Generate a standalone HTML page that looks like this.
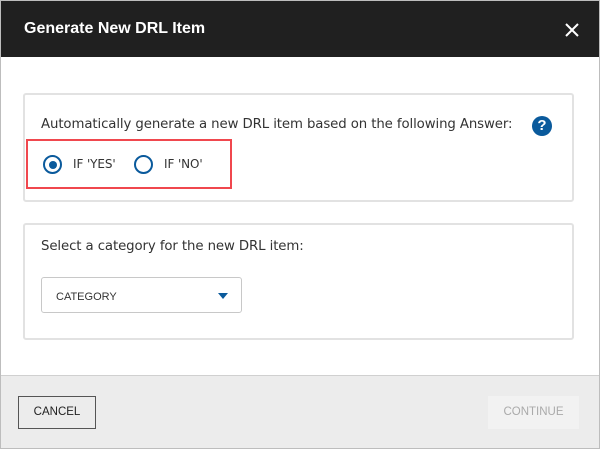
<!DOCTYPE html>
<html><head><style>
*{box-sizing:border-box;margin:0;padding:0}
body{width:600px;height:449px;background:#fff;font-family:"Liberation Sans",sans-serif;position:relative;overflow:hidden}
.frame{position:absolute;left:0;top:0;width:600px;height:449px;border:1px solid #bdbdbd}
.hdr{position:absolute;left:1px;top:1px;width:598px;height:56px;background:#202020;color:#fff;font-weight:bold;font-size:16px}
.hdr span{position:absolute;left:23px;top:19px}
.box{position:absolute;left:23px;width:551px;border:2px solid #e2e2e2;border-radius:3px;background:#fff}
.t{position:absolute;font-size:13.3px;color:#333;font-family:"DejaVu Sans",sans-serif;white-space:nowrap;letter-spacing:-0.1px}
.rad{position:absolute;width:19px;height:19px;border:2px solid #0a5a9c;border-radius:50%}
.foot{position:absolute;left:1px;top:375px;width:598px;height:73px;background:#ececec;border-top:1px solid #d0d0d0}
</style></head><body>
<div class="frame"></div>
<div class="hdr"><span>Generate New DRL Item</span>
<svg style="position:absolute;left:564px;top:22px" width="14" height="14" viewBox="0 0 14 14"><path d="M1 1L13 13M13 1L1 13" stroke="#fff" stroke-width="2"/></svg></div>
<div class="box" style="top:93px;height:109px"></div>
<div class="t" style="left:41px;top:117px">Automatically generate a new DRL item based on the following Answer:</div>
<div style="position:absolute;left:532px;top:116px;width:20px;height:20px;border-radius:50%;background:#0a5a9c;color:#fff;font-weight:bold;font-size:15px;text-align:center;line-height:20px">?</div>
<div style="position:absolute;left:26px;top:139px;width:206px;height:50px;border:2px solid #f0474e"></div>
<div class="rad" style="left:43px;top:155px"><div style="position:absolute;left:3.5px;top:3.5px;width:8px;height:8px;border-radius:50%;background:#0a5a9c"></div></div>
<div class="t" style="left:73px;top:157px;font-size:12px">IF 'YES'</div>
<div class="rad" style="left:134px;top:155px"></div>
<div class="t" style="left:164px;top:157px;font-size:12px">IF 'NO'</div>
<div class="box" style="top:223px;height:117px"></div>
<div class="t" style="left:41px;top:239px">Select a category for the new DRL item:</div>
<div style="position:absolute;left:41px;top:277px;width:201px;height:36px;border:1px solid #c8c8c8;border-radius:3px"></div>
<div class="t" style="left:56px;top:291px;font-size:11px;font-family:'Liberation Sans',sans-serif;letter-spacing:0">CATEGORY</div>
<svg style="position:absolute;left:218px;top:293px" width="10" height="6"><path d="M0 0H10L5 6Z" fill="#0a5a9c"/></svg>
<div class="foot"></div>
<div style="position:absolute;left:18px;top:396px;width:78px;height:33px;border:1px solid #555;font-size:11.5px;color:#222;text-align:center;line-height:31px">CANCEL</div>
<div style="position:absolute;left:488px;top:396px;width:91px;height:33px;background:#f2f2f2;font-size:11.5px;color:#aaa;text-align:center;line-height:33px">CONTINUE</div>
</body></html>
